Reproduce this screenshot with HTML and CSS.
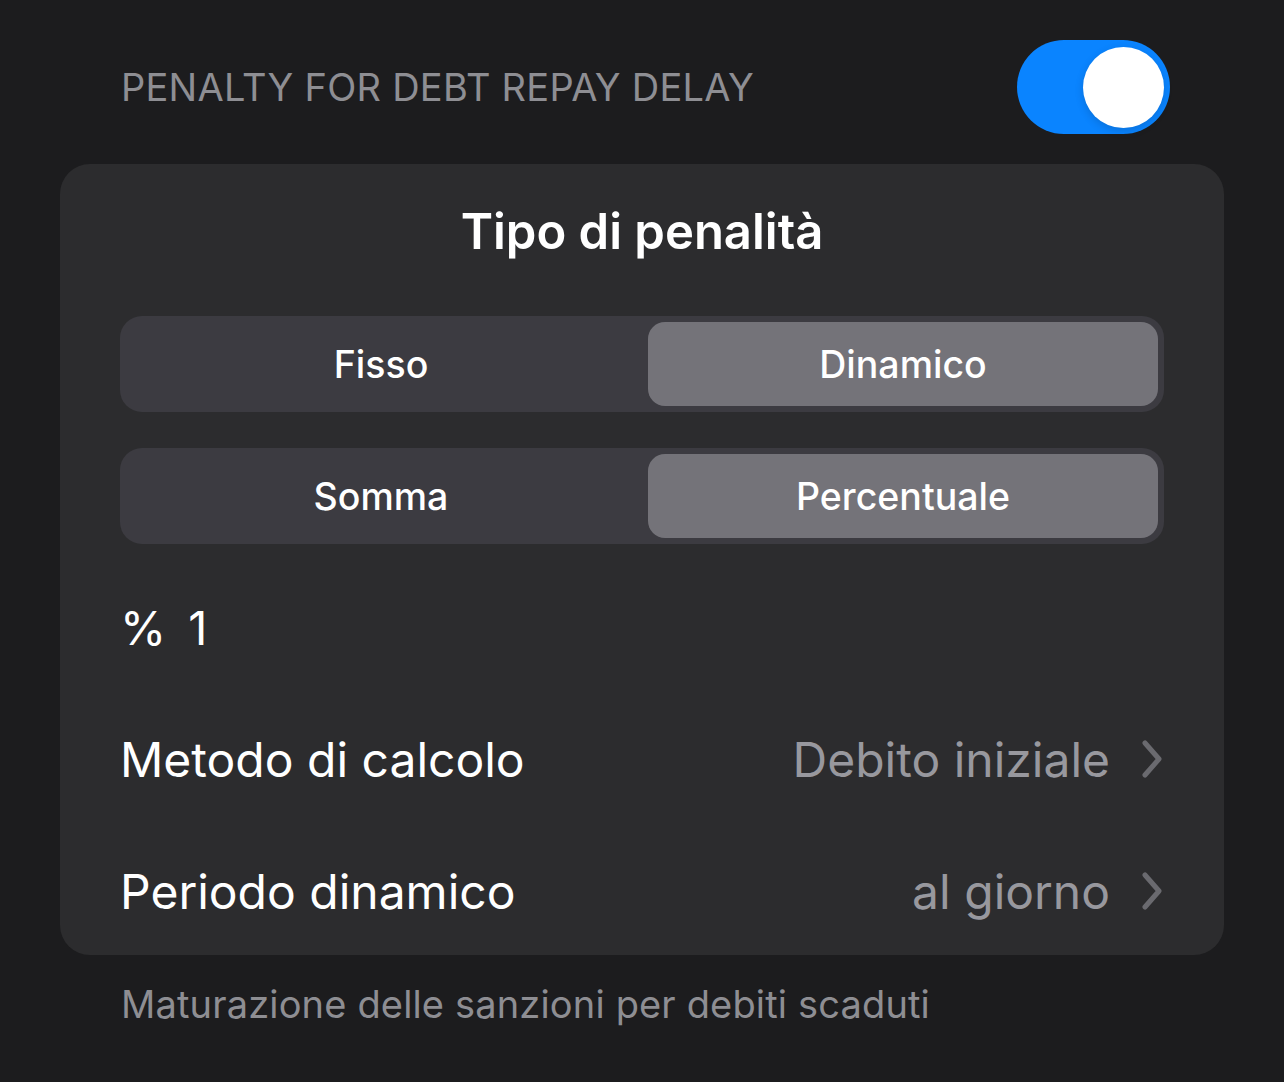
FILE: index.html
```html
<!DOCTYPE html>
<html lang="it">
<head>
<meta charset="utf-8">
<link rel="stylesheet" href="styles.css">
<title>Penalty</title>
</head>
<body>
<div class="page">
  <div class="header">
    <span class="header-label">PENALTY FOR DEBT REPAY DELAY</span>
    <div class="toggle"><div class="knob"></div></div>
  </div>
  <div class="card">
    <div class="title">Tipo di penalità</div>
    <div class="segmented">
      <div class="seg">Fisso</div>
      <div class="seg selected">Dinamico</div>
    </div>
    <div class="segmented second">
      <div class="seg">Somma</div>
      <div class="seg selected">Percentuale</div>
    </div>
    <div class="row percent-row"><span class="pct">%</span><span class="num">1</span></div>
    <div class="row">
      <span class="row-label">Metodo di calcolo</span>
      <span class="row-value">Debito iniziale
        <svg class="chev" width="22" height="38" viewBox="0 0 22 38"><path d="M4 3 L18 19 L4 35" fill="none" stroke="#6a6a6f" stroke-width="5" stroke-linecap="round" stroke-linejoin="round"/></svg>
      </span>
    </div>
    <div class="row last">
      <span class="row-label">Periodo dinamico</span>
      <span class="row-value">al giorno
        <svg class="chev" width="22" height="38" viewBox="0 0 22 38"><path d="M4 3 L18 19 L4 35" fill="none" stroke="#6a6a6f" stroke-width="5" stroke-linecap="round" stroke-linejoin="round"/></svg>
      </span>
    </div>
  </div>
  <div class="footer">Maturazione delle sanzioni per debiti scaduti</div>
</div>
</body>
</html>
```
FILE: styles.css
```css
html, body {
  margin: 0;
  padding: 0;
  background: #1c1c1e;
}
body {
  font-family: Inter, "Noto Sans", sans-serif;
  color: #ffffff;
}
.page {
  width: 1284px;
  height: 1082px;
  overflow: hidden;
}
.header {
  display: flex;
  justify-content: space-between;
  align-items: center;
  height: 94px;
  padding: 40px 114px 0 121px;
}
.header-label {
  font-size: 38px;
  color: #8e8e93;
  letter-spacing: 0.25px;
}
.toggle {
  width: 153px;
  height: 94px;
  border-radius: 47px;
  background: #0a84ff;
  display: flex;
  align-items: center;
  justify-content: flex-end;
  padding-right: 6px;
  box-sizing: border-box;
}
.knob {
  width: 81px;
  height: 81px;
  border-radius: 50%;
  background: #ffffff;
  box-shadow: 0 3px 8px rgba(0,0,0,0.15);
}
.card {
  margin: 30px 0 0 60px;
  width: 1164px;
  height: 791px;
  box-sizing: border-box;
  border-radius: 30px;
  background: #2c2c2e;
  padding: 34px 60px 0;
  overflow: hidden;
}
.title {
  height: 68px;
  line-height: 68px;
  text-align: center;
  font-size: 49px;
  font-weight: 600;
  margin-bottom: 50px;
}
.segmented {
  display: grid;
  grid-template-columns: 1fr 1fr;
  column-gap: 12px;
  height: 96px;
  border-radius: 22px;
  background: #3c3b41;
  padding: 6px;
  box-sizing: border-box;
}
.segmented.second {
  margin-top: 36px;
}
.seg {
  display: flex;
  align-items: center;
  justify-content: center;
  font-size: 37.5px;
  font-weight: 500;
  border-radius: 17px;
}
.seg.selected {
  background: #747379;
}
.row {
  height: 132px;
  display: flex;
  align-items: center;
  justify-content: space-between;
  font-size: 48px;
}
.percent-row {
  margin-top: 17px;
  justify-content: flex-start;
  gap: 22px;
  font-size: 47px;
}
.row-label {
  color: #ffffff;
}
.row-value {
  display: flex;
  align-items: center;
  gap: 31px;
  color: #98989e;
}
.chev {
  display: block;
  margin-right: 1px;
}
.footer {
  padding: 26px 0 0 121px;
  font-size: 38px;
  letter-spacing: 0.16px;
  color: #8e8e93;
}
```
